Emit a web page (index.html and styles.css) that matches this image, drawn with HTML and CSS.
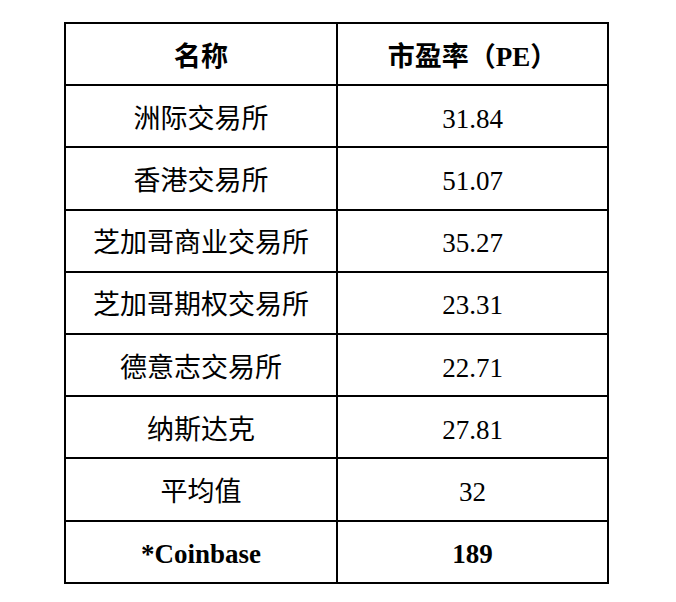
FILE: index.html
```html
<!DOCTYPE html>
<html lang="zh">
<head>
<meta charset="utf-8">
<link rel="stylesheet" href="styles.css">
</head>
<body>
<table class="pe-table">
  <colgroup><col class="c1"><col class="c2"></colgroup>
  <thead>
    <tr><th>名称</th><th>市盈率（PE）</th></tr>
  </thead>
  <tbody>
    <tr><td>洲际交易所</td><td>31.84</td></tr>
    <tr><td>香港交易所</td><td>51.07</td></tr>
    <tr><td>芝加哥商业交易所</td><td>35.27</td></tr>
    <tr><td>芝加哥期权交易所</td><td>23.31</td></tr>
    <tr><td>德意志交易所</td><td>22.71</td></tr>
    <tr><td>纳斯达克</td><td>27.81</td></tr>
    <tr><td>平均值</td><td>32</td></tr>
    <tr class="strong"><td>*Coinbase</td><td>189</td></tr>
  </tbody>
</table>
</body>
</html>
```
FILE: styles.css
```css
html, body {
  margin: 0;
  padding: 0;
  background: #fff;
}
body {
  padding: 22px 0 0 64px;
  font-family: "Liberation Serif", "Noto Sans CJK SC", serif;
  color: #000;
}
.pe-table {
  border-collapse: collapse;
  table-layout: fixed;
  width: 543px;
}
.pe-table .c1 { width: 272px; }
.pe-table .c2 { width: 271px; }
.pe-table th,
.pe-table td {
  border: 2px solid #000;
  height: 55.2px;
  padding: 5px 0 0 0;
  text-align: center;
  vertical-align: middle;
  font-size: 27px;
  line-height: 30px;
}
.pe-table th {
  font-weight: bold;
}
.pe-table td {
  font-weight: normal;
}
.pe-table tr.strong td {
  font-weight: bold;
}
```
